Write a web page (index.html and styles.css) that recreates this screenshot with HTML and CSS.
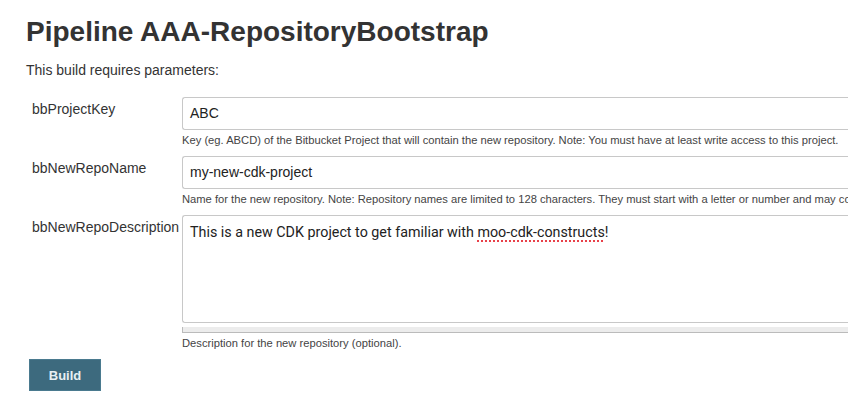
FILE: index.html
```html
<!DOCTYPE html>
<html>
<head>
<meta charset="utf-8">
<link rel="stylesheet" href="styles.css">
</head>
<body>
<div class="page">
  <h1 class="title">Pipeline AAA-RepositoryBootstrap</h1>
  <p class="intro">This build requires parameters:</p>
  <div class="params">
    <div class="label">bbProjectKey</div>
    <div class="field">
      <div class="input">ABC</div>
      <div class="desc">Key (eg. ABCD) of the Bitbucket Project that will contain the new repository. Note: You must have at least write access to this project.</div>
    </div>
    <div class="label">bbNewRepoName</div>
    <div class="field">
      <div class="input">my-new-cdk-project</div>
      <div class="desc">Name for the new repository. Note: Repository names are limited to 128 characters. They must start with a letter or number and may contain spaces, hyphens, underscores and periods.</div>
    </div>
    <div class="label">bbNewRepoDescription</div>
    <div class="field">
      <div class="textarea">This is a new CDK project to get familiar with <span class="spell">moo-cdk-constructs</span>!</div>
      <div class="handle"></div>
      <div class="desc">Description for the new repository (optional).</div>
    </div>
  </div>
  <button class="build">Build</button>
</div>
</body>
</html>
```
FILE: styles.css
```css
html, body {
  margin: 0;
  padding: 0;
  background: #fff;
  overflow: hidden;
}
body {
  width: 848px;
  height: 406px;
  font-family: "Liberation Sans", Arial, sans-serif;
  color: #333;
}
.page {
  padding: 14px 0 0 26px;
}
.title {
  margin: 0;
  font-size: 28px;
  line-height: 36px;
  font-weight: bold;
  color: #333;
}
.intro {
  margin: 12px 0 0 0;
  font-size: 14px;
  line-height: 16px;
}
.params {
  display: grid;
  grid-template-columns: 156px 700px;
  row-gap: 8px;
  margin-top: 19px;
}
.label {
  padding: 3px 0 0 6px;
  font-size: 14px;
  line-height: 18px;
  white-space: nowrap;
}
.field {
  display: flex;
  flex-direction: column;
  overflow: hidden;
}
.input {
  height: 31px;
  border: 1px solid #c8c8c8;
  border-right: none;
  border-radius: 3px 0 0 3px;
  padding: 0 7px;
  font-size: 14px;
  line-height: 31px;
  color: #222;
}
.textarea {
  border: 1px solid #c8c8c8;
  border-right: none;
  border-radius: 3px 0 0 3px;
  padding: 6px 7px 0;
  box-sizing: border-box;
  height: 108px;
  font-family: Roboto, "Liberation Sans", sans-serif;
  font-size: 14.3px;
  line-height: 20px;
  color: #222;
}
.spell {
  text-decoration-line: underline;
  text-decoration-style: dotted;
  text-decoration-color: #e8414a;
  text-decoration-thickness: 2px;
  text-underline-offset: 3px;
}
.handle {
  margin-top: 4px;
  height: 5px;
  background: #ececec;
  border-left: 1px solid #bbb;
  border-bottom: 1px solid #bbb;
}
.desc {
  margin-top: 2px;
  font-size: 11.2px;
  line-height: 16px;
  color: #444;
  white-space: nowrap;
}
.build {
  margin: 8px 0 0 3px;
  width: 72px;
  height: 32px;
  border: 1px solid #4a7a8f;
  background: #3d6a7e;
  color: #e8f0f3;
  font-family: "Liberation Sans", Arial, sans-serif;
  font-size: 13px;
  font-weight: bold;
  padding: 0;
}
```
